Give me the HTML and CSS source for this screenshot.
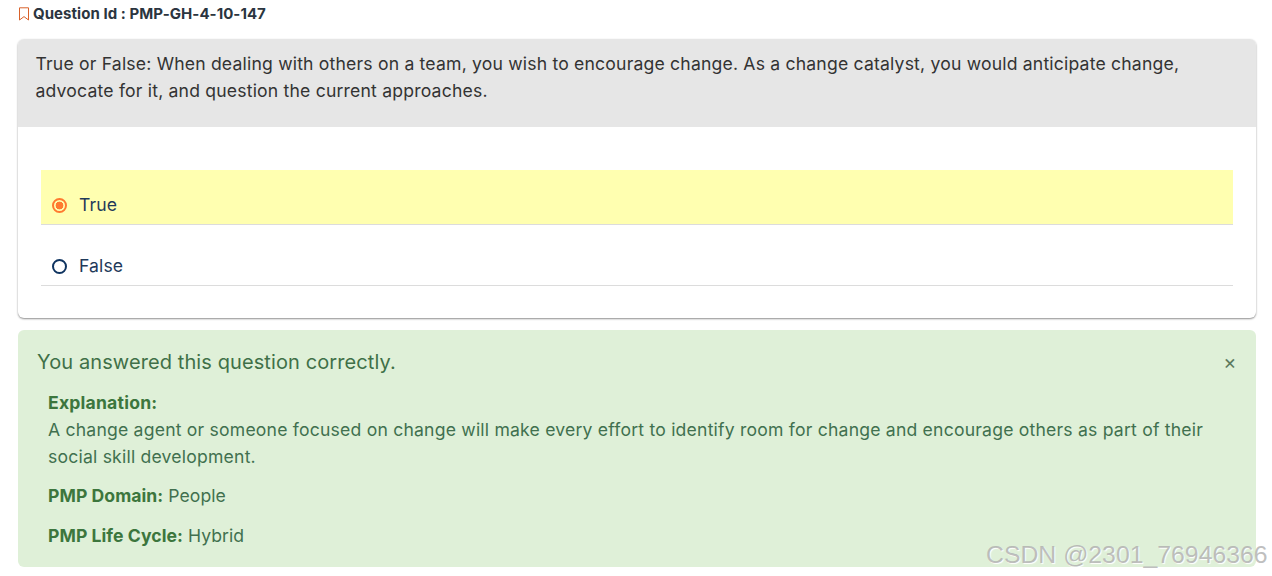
FILE: index.html
```html
<!DOCTYPE html>
<html lang="en">
<head>
    <meta charset="UTF-8">
    <title>Question PMP-GH-4-10-147</title>
    <link rel="stylesheet" href="styles.css">
</head>
<body>
    <div class="question-id">
        <svg class="bookmark" width="12" height="14" viewBox="0 0 12 14" fill="none">
            <path d="M1.5 .8h9v12.2L6 9.6 1.5 13z" stroke="#d9622b" stroke-width="1"/>
        </svg>
        <span>Question Id : PMP-GH-4-10-147</span>
    </div>

    <div class="card">
        <div class="card-header">True or False: When dealing with others on a team, you wish to encourage change. As a change catalyst, you would anticipate change, advocate for it, and question the current approaches.</div>
        <div class="card-body">
            <div class="option selected">
                <span class="radio"></span>
                <span>True</span>
            </div>
            <div class="option">
                <span class="radio"></span>
                <span>False</span>
            </div>
        </div>
    </div>

    <div class="alert">
        <div class="alert-head">
            <span>You answered this question correctly.</span>
            <span class="close">×</span>
        </div>
        <div class="alert-body">
            <p><b>Explanation:</b><br>A change agent or someone focused on change will make every effort to identify room for change and encourage others as part of their social skill development.</p>
            <p class="meta"><b>PMP Domain:</b> People</p>
            <p class="meta"><b>PMP Life Cycle:</b> Hybrid</p>
        </div>
    </div>

    <div class="watermark">CSDN @2301_76946366</div>
</body>
</html>
```

FILE: styles.css
```css
html, body {
    height: 576px;
    overflow: hidden;
}

body {
    position: relative;
    margin: 0;
    padding: 0 16px 0 18px;
    font-family: Inter, "Noto Sans", sans-serif;
    font-size: 17.6px;
    line-height: 27px;
    color: #333;
    background: #fff;
}

.question-id {
    display: flex;
    align-items: center;
    gap: 3px;
    height: 27px;
    font-size: 15px;
    font-weight: 700;
    letter-spacing: 0.05px;
    color: #2b3540;
}

.card {
    margin-top: 12px;
    height: 279px;
    box-sizing: border-box;
    border-radius: 6px;
    background: #fff;
    box-shadow: 0 1px 2px rgba(0, 0, 0, 0.45);
}

.card-header {
    height: 88px;
    box-sizing: border-box;
    padding: 11px 17.5px;
    background: #e6e6e6;
    border-radius: 6px 6px 0 0;
    letter-spacing: 0.185px;
}

.card-body {
    padding: 43px 23px 0;
}

.option {
    display: flex;
    align-items: center;
    gap: 12px;
    height: 55px;
    padding: 15px 11px 0;
    box-sizing: border-box;
    margin-bottom: 6px;
    border-bottom: 1px solid #dcdcdc;
    color: #1f3a5a;
    letter-spacing: 0.1px;
}

.option.selected {
    background: #ffffb0;
}

.radio {
    width: 15px;
    height: 15px;
    margin-top: 1px;
    box-sizing: border-box;
    border: 2px solid #0f3460;
    border-radius: 50%;
}

.selected .radio {
    border-color: #ff7a30;
    background: radial-gradient(circle, #ff7a30 0 3.6px, transparent 4.2px);
}

.alert {
    margin-top: 12px;
    height: 237px;
    box-sizing: border-box;
    padding: 18px 19px;
    border-radius: 6px;
    background: #dff0d8;
    color: #41704f;
}

.alert-head {
    display: flex;
    justify-content: space-between;
    align-items: center;
    font-size: 20px;
    line-height: 28px;
    letter-spacing: 0.1px;
    color: #3f7048;
}

.close {
    font-size: 20px;
    color: #5d7a5e;
    margin-right: 0.5px;
}

.alert-body {
    padding: 13px 11px 0;
    letter-spacing: 0.2px;
}

.alert-body b {
    color: #3c763d;
}

.alert-body p {
    margin: 0 0 12px;
}

.alert-body .meta {
    margin-bottom: 13px;
    letter-spacing: 0.05px;
}

.watermark {
    position: absolute;
    left: 986px;
    top: 541px;
    font-family: "Liberation Sans", sans-serif;
    font-size: 24.8px;
    line-height: 27px;
    white-space: nowrap;
    color: rgba(170, 170, 170, 0.75);
    text-shadow: 1px 1px 1px #fff;
}
```
